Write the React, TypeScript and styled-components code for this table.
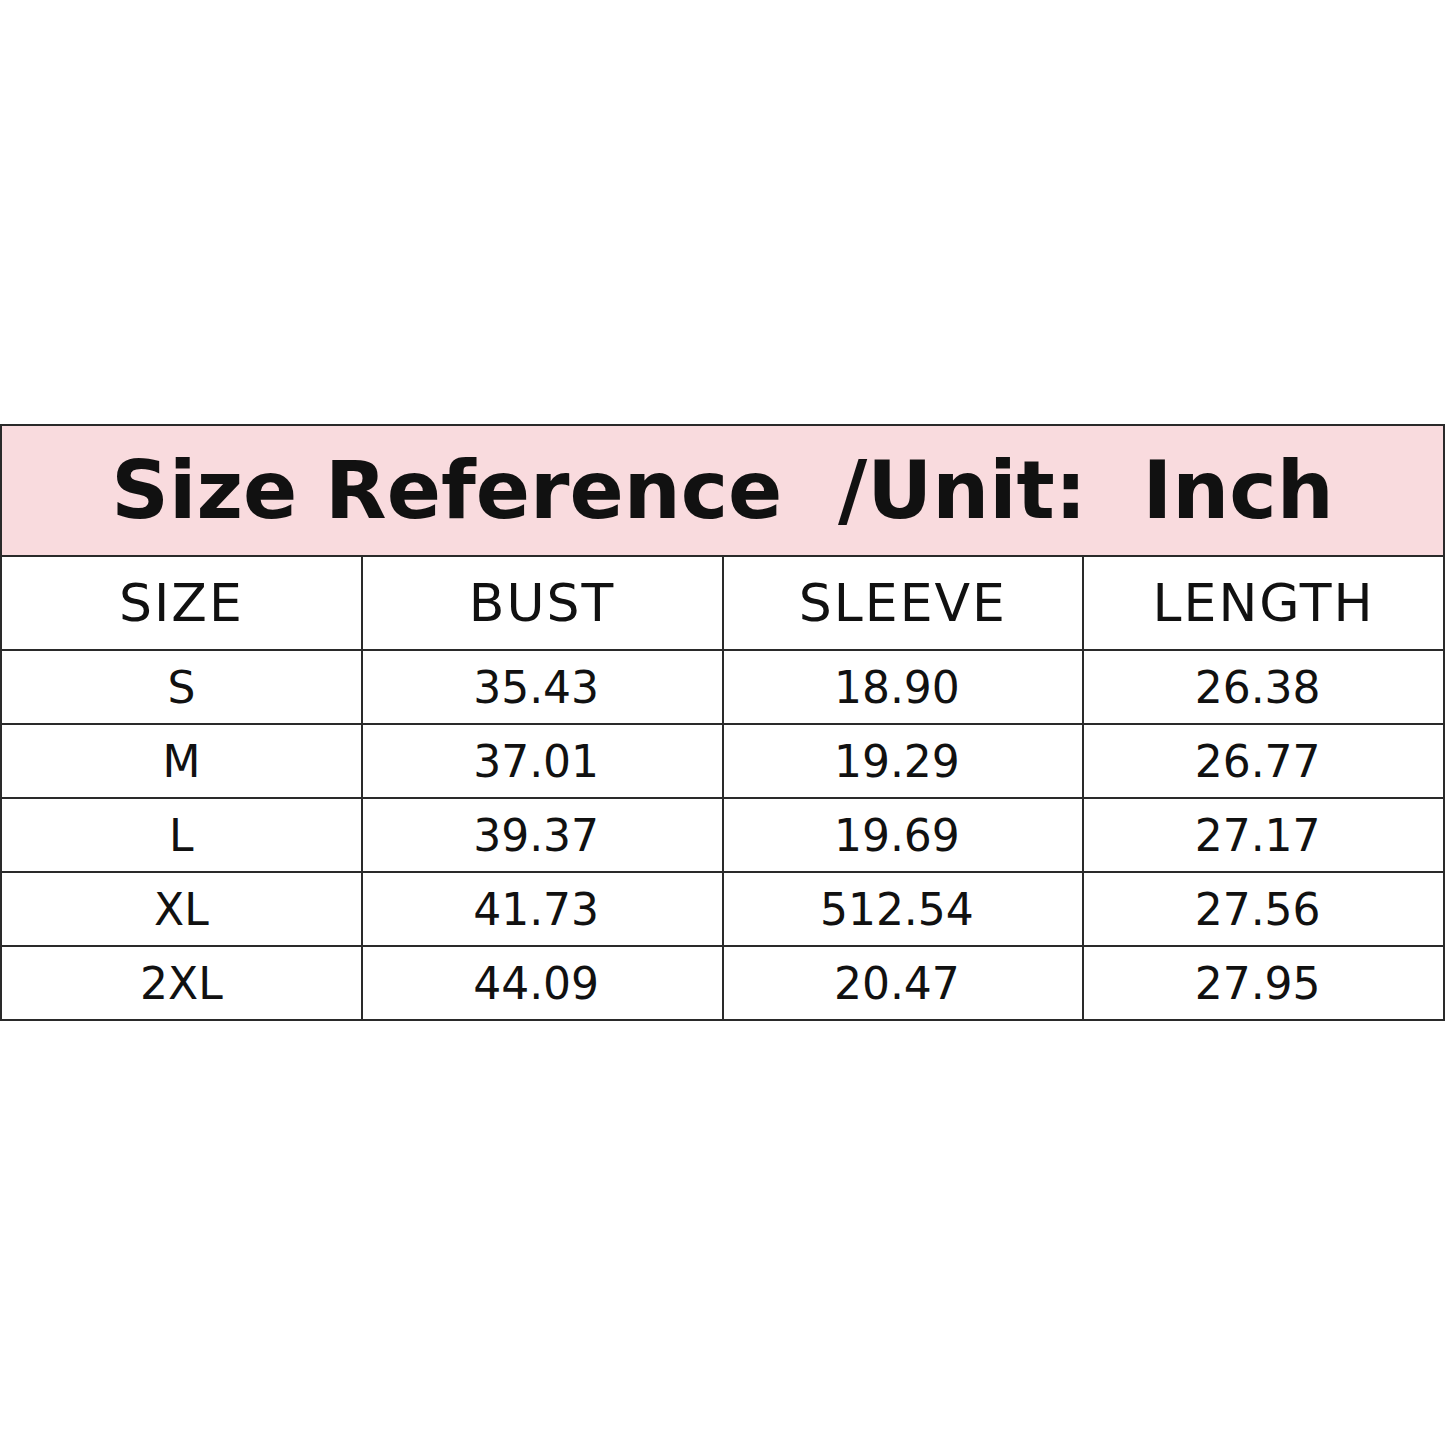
import React from 'react';
import styled, { createGlobalStyle } from 'styled-components';

const GlobalStyle = createGlobalStyle`
  html, body {
    margin: 0;
    padding: 0;
    background: #ffffff;
  }
`;

const Page = styled.div`
  width: 1445px;
  height: 1445px;
  display: flex;
  flex-direction: column;
  justify-content: center;
  font-family: "DejaVu Sans", "Noto Sans", sans-serif;
  color: #111;
`;

const Table = styled.table`
  width: 1445px;
  border-collapse: collapse;
  table-layout: fixed;
`;

const TitleCell = styled.th`
  background-color: #f9dbde;
  border: 2px solid #2a2a2a;
  height: 129px;
  padding: 0;
  font-size: 80px;
  font-weight: 700;
  letter-spacing: 0px;
  white-space: pre;
  text-align: center;
`;

const HeadCell = styled.th`
  border: 2px solid #2a2a2a;
  height: 92px;
  padding: 0;
  font-size: 52px;
  font-weight: 400;
  letter-spacing: 2px;
  text-align: center;
`;

const Cell = styled.td<{ $shift?: boolean }>`
  border: 2px solid #2a2a2a;
  height: 72px;
  padding: 0 ${(p) => (p.$shift ? '12px' : '0')} 0 0;
  font-size: 44px;
  text-align: center;
`;

interface SizeRow {
  size: string;
  bust: string;
  sleeve: string;
  length: string;
}

const rows: SizeRow[] = [
  { size: 'S', bust: '35.43', sleeve: '18.90', length: '26.38' },
  { size: 'M', bust: '37.01', sleeve: '19.29', length: '26.77' },
  { size: 'L', bust: '39.37', sleeve: '19.69', length: '27.17' },
  { size: 'XL', bust: '41.73', sleeve: '512.54', length: '27.56' },
  { size: '2XL', bust: '44.09', sleeve: '20.47', length: '27.95' },
];

function App() {
  return (
    <>
      <GlobalStyle />
      <Page>
        <Table>
          <thead>
            <tr>
              <TitleCell colSpan={4}>{'Size Reference  /Unit:  Inch'}</TitleCell>
            </tr>
            <tr>
              <HeadCell>SIZE</HeadCell>
              <HeadCell>BUST</HeadCell>
              <HeadCell>SLEEVE</HeadCell>
              <HeadCell>LENGTH</HeadCell>
            </tr>
          </thead>
          <tbody>
            {rows.map((r) => (
              <tr key={r.size}>
                <Cell>{r.size}</Cell>
                <Cell $shift>{r.bust}</Cell>
                <Cell $shift>{r.sleeve}</Cell>
                <Cell $shift>{r.length}</Cell>
              </tr>
            ))}
          </tbody>
        </Table>
      </Page>
    </>
  );
}

export default App;
